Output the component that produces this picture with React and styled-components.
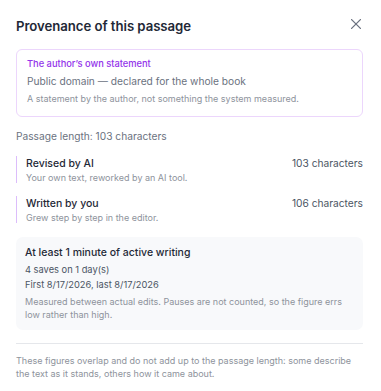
import React from "react";
import styled, { createGlobalStyle } from "styled-components";

const Global = createGlobalStyle`
  html, body { margin: 0; padding: 0; background: #fff; }
  body { font-family: Inter, "Noto Sans", sans-serif; -webkit-font-smoothing: antialiased; }
  * { box-sizing: border-box; }
`;

const Dialog = styled.div`
  width: 381px;
  height: 391px;
  padding: 16px 18px 0 16px;
  display: flex;
  flex-direction: column;
  color: #1f2937;
`;

const Header = styled.div`
  display: flex;
  align-items: center;
  justify-content: space-between;
  height: 22px;
  margin-top: -1px;
`;

const Title = styled.h2`
  margin: 0;
  font-size: 13.2px;
  font-weight: 600;
  color: #1f2937;
  letter-spacing: -0.05px;
`;

const Close = styled.button`
  border: 0;
  background: none;
  padding: 0;
  width: 14px;
  height: 14px;
  margin-top: -4px;
  display: flex;
  align-items: center;
  justify-content: center;
  cursor: pointer;
`;

const StatementBox = styled.div`
  margin-top: 12px;
  border: 1px solid #ecd6fc;
  border-radius: 6px;
  padding: 7px 10px 11px 10px;
  display: flex;
  flex-direction: column;
`;

const Label = styled.div`
  font-size: 9.3px;
  font-weight: 500;
  color: #9333ea;
  line-height: 14px;
`;

const Statement = styled.div`
  font-size: 10.2px;
  color: #6b7280;
  line-height: 16px;
  margin-top: 2px;
`;

const Note = styled.div`
  font-size: 9px;
  color: #8e939c;
  line-height: 12.4px;
  margin-top: ${(p) => p.$mt || 0}px;
`;

const Length = styled.div`
  font-size: 10.2px;
  color: #6b7280;
  margin-top: 12px;
  line-height: 14px;
`;

const Rows = styled.div`
  display: flex;
  flex-direction: column;
  gap: 13px;
  margin-top: 13px;
`;

const Row = styled.div`
  border-left: 1.5px solid #dcbdfb;
  padding-left: 9px;
  display: flex;
  justify-content: space-between;
  align-items: flex-start;
  height: 27px;
`;

const RowText = styled.div`
  display: flex;
  flex-direction: column;
`;

const RowTitle = styled.div`
  font-size: 10.5px;
  font-weight: 500;
  color: #1f2937;
  line-height: 13px;
  margin-top: 1px;
`;

const RowSub = styled.div`
  font-size: 9px;
  color: #8e939c;
  line-height: 12px;
  margin-top: 2px;
`;

const Count = styled.div`
  font-size: 10.2px;
  color: #4b5563;
  line-height: 13px;
  margin-top: 1px;
`;

const Card = styled.div`
  margin-top: 14px;
  background: #f8f9fb;
  border-radius: 7px;
  padding: 9px 9px 9px 9px;
  display: flex;
  flex-direction: column;
`;

const CardTitle = styled.div`
  font-size: 10.5px;
  font-weight: 500;
  color: #1f2937;
  line-height: 14px;
`;

const Meta = styled.div`
  font-size: 9.3px;
  color: #4b5563;
  line-height: 15px;
  margin-top: ${(p) => p.$mt || 0}px;
`;

const Divider = styled.hr`
  border: 0;
  border-top: 1px solid #e5e7eb;
  margin: 13px 0 0 0;
`;

export default function App() {
  return (
    <>
      <Global />
      <Dialog>
        <Header>
          <Title>Provenance of this passage</Title>
          <Close aria-label="Close">
            <svg width="10" height="10" viewBox="0 0 10 10" fill="none">
              <path d="M0.6 0.6L9.4 9.4M9.4 0.6L0.6 9.4" stroke="#6b7280" strokeWidth="1.3" strokeLinecap="round" />
            </svg>
          </Close>
        </Header>

        <StatementBox>
          <Label>The author’s own statement</Label>
          <Statement>Public domain — declared for the whole book</Statement>
          <Note $mt={4}>A statement by the author, not something the system measured.</Note>
        </StatementBox>

        <Length>Passage length: 103 characters</Length>

        <Rows>
          <Row>
            <RowText>
              <RowTitle>Revised by AI</RowTitle>
              <RowSub>Your own text, reworked by an AI tool.</RowSub>
            </RowText>
            <Count>103 characters</Count>
          </Row>
          <Row>
            <RowText>
              <RowTitle>Written by you</RowTitle>
              <RowSub>Grew step by step in the editor.</RowSub>
            </RowText>
            <Count>106 characters</Count>
          </Row>
        </Rows>

        <Card>
          <CardTitle>At least 1 minute of active writing</CardTitle>
          <Meta $mt={2}>4 saves on 1 day(s)</Meta>
          <Meta>First 8/17/2026, last 8/17/2026</Meta>
          <Note $mt={4}>
            Measured between actual edits. Pauses are not counted, so the figure errs low rather than high.
          </Note>
        </Card>

        <Divider />
        <Note $mt={11}>
          These figures overlap and do not add up to the passage length: some describe the text as it stands, others how it came about.
        </Note>
      </Dialog>
    </>
  );
}
